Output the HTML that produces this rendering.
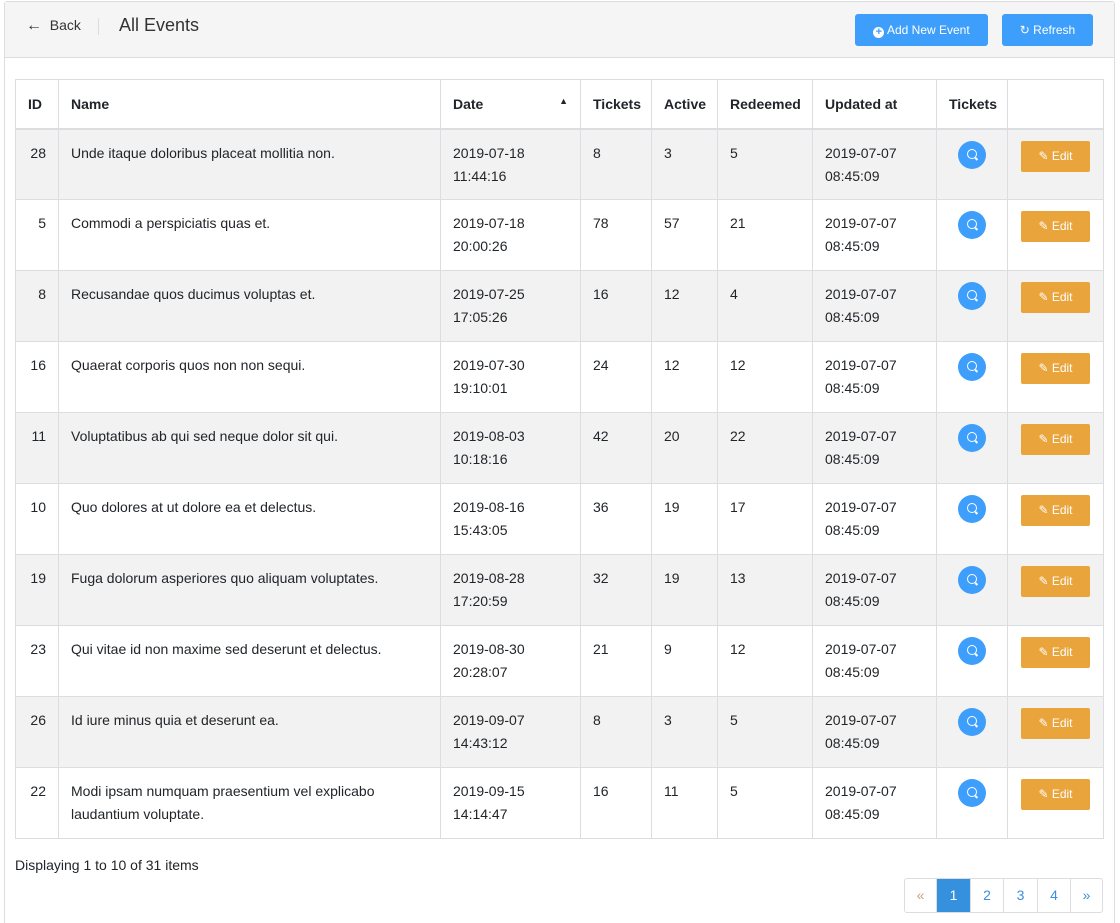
<!DOCTYPE html>
<html><head><style>
*{box-sizing:border-box;margin:0;padding:0}
html,body{width:1120px;height:923px;overflow:hidden}
body{background:#fff;font-family:"Liberation Sans",sans-serif;color:#212529;font-size:14px;position:relative}
.card{position:absolute;left:4px;top:1px;width:1111px;height:940px;border:1px solid #dcdde0;border-radius:3px}
.hdr{position:absolute;left:5px;top:2px;width:1109px;height:56px;background:#f5f5f6;border-bottom:1px solid #dcdde0}
.back{position:absolute;left:26px;top:17px;font-size:14px;color:#333}
.sep{position:absolute;left:98px;top:18px;width:1px;height:17px;background:#dcdde0}
.title{position:absolute;left:119px;top:15px;font-size:18px;color:#333}
.btn{position:absolute;top:14px;height:32px;background:#3e9efb;color:#fff;border-radius:3px;font-size:12px;line-height:32px;text-align:center}
table{position:absolute;left:15px;top:79px;border-collapse:collapse;width:1088px;table-layout:fixed}
td,th{border:1px solid #dcdde0;vertical-align:top;text-align:left;padding:0 12px}
th{height:49px;font-weight:bold;font-size:14px;vertical-align:middle;border-bottom:2px solid #dcdde0}
td{height:71px;padding-top:12px;line-height:23px}
tbody tr:nth-child(odd){background:#f2f2f2}
.c{text-align:center}
.srch{display:inline-block;width:28px;height:28px;border-radius:50%;background:#3e9efb;margin-top:-1px;position:relative}
.edit{display:inline-block;width:69px;height:31px;background:#e9a43b;border-radius:2px;color:#fff;font-size:12px;line-height:31px;margin-top:-1px}
.info{position:absolute;left:15px;top:857px;font-size:14px}
.pg{position:absolute;left:904px;top:878px;height:35px;display:flex;border:1px solid #dcdde0;border-radius:3px;overflow:hidden}
.pg div{height:33px;line-height:33px;text-align:center;color:#3e8ee0;border-left:1px solid #dcdde0;font-size:14px}
.srch::after{content:"";position:absolute;left:9px;top:8px;width:8px;height:8px;border:1.5px solid #fff;border-radius:50%}
.srch::before{content:"";position:absolute;left:17px;top:17px;width:3px;height:1.5px;background:#fff;transform:rotate(45deg)}
</style></head><body>
<div class="card"></div>
<div class="hdr"></div>
<div class="back"><span style="font-size:16px">&#8592;</span>&nbsp; Back</div>
<div class="sep"></div>
<div class="title">All Events</div>
<div class="btn" style="left:855px;width:133px"><span style="display:inline-block;width:11px;height:11px;border-radius:50%;background:#fff;color:#3e9efb;font-size:11px;line-height:11px;font-weight:bold;vertical-align:-1px">+</span> Add New Event</div>
<div class="btn" style="left:1002px;width:91px">&#8635; Refresh</div>
<table>
<colgroup><col style="width:43px"><col style="width:382px"><col style="width:140px"><col style="width:71px"><col style="width:66px"><col style="width:95px"><col style="width:124px"><col style="width:71px"><col style="width:96px"></colgroup>
<thead><tr><th>ID</th><th>Name</th><th>Date<span style="float:right;font-size:9px">&#9650;</span></th><th>Tickets</th><th>Active</th><th>Redeemed</th><th>Updated at</th><th>Tickets</th><th></th></tr></thead>
<tbody>
<tr><td style="text-align:right">28</td><td>Unde itaque doloribus placeat mollitia non.</td><td>2019-07-18<br>11:44:16</td><td>8</td><td>3</td><td>5</td><td>2019-07-07<br>08:45:09</td><td class="c"><span class="srch"></span></td><td class="c"><span class="edit">&#9998; Edit</span></td></tr>
<tr><td style="text-align:right">5</td><td>Commodi a perspiciatis quas et.</td><td>2019-07-18<br>20:00:26</td><td>78</td><td>57</td><td>21</td><td>2019-07-07<br>08:45:09</td><td class="c"><span class="srch"></span></td><td class="c"><span class="edit">&#9998; Edit</span></td></tr>
<tr><td style="text-align:right">8</td><td>Recusandae quos ducimus voluptas et.</td><td>2019-07-25<br>17:05:26</td><td>16</td><td>12</td><td>4</td><td>2019-07-07<br>08:45:09</td><td class="c"><span class="srch"></span></td><td class="c"><span class="edit">&#9998; Edit</span></td></tr>
<tr><td style="text-align:right">16</td><td>Quaerat corporis quos non non sequi.</td><td>2019-07-30<br>19:10:01</td><td>24</td><td>12</td><td>12</td><td>2019-07-07<br>08:45:09</td><td class="c"><span class="srch"></span></td><td class="c"><span class="edit">&#9998; Edit</span></td></tr>
<tr><td style="text-align:right">11</td><td>Voluptatibus ab qui sed neque dolor sit qui.</td><td>2019-08-03<br>10:18:16</td><td>42</td><td>20</td><td>22</td><td>2019-07-07<br>08:45:09</td><td class="c"><span class="srch"></span></td><td class="c"><span class="edit">&#9998; Edit</span></td></tr>
<tr><td style="text-align:right">10</td><td>Quo dolores at ut dolore ea et delectus.</td><td>2019-08-16<br>15:43:05</td><td>36</td><td>19</td><td>17</td><td>2019-07-07<br>08:45:09</td><td class="c"><span class="srch"></span></td><td class="c"><span class="edit">&#9998; Edit</span></td></tr>
<tr><td style="text-align:right">19</td><td>Fuga dolorum asperiores quo aliquam voluptates.</td><td>2019-08-28<br>17:20:59</td><td>32</td><td>19</td><td>13</td><td>2019-07-07<br>08:45:09</td><td class="c"><span class="srch"></span></td><td class="c"><span class="edit">&#9998; Edit</span></td></tr>
<tr><td style="text-align:right">23</td><td>Qui vitae id non maxime sed deserunt et delectus.</td><td>2019-08-30<br>20:28:07</td><td>21</td><td>9</td><td>12</td><td>2019-07-07<br>08:45:09</td><td class="c"><span class="srch"></span></td><td class="c"><span class="edit">&#9998; Edit</span></td></tr>
<tr><td style="text-align:right">26</td><td>Id iure minus quia et deserunt ea.</td><td>2019-09-07<br>14:43:12</td><td>8</td><td>3</td><td>5</td><td>2019-07-07<br>08:45:09</td><td class="c"><span class="srch"></span></td><td class="c"><span class="edit">&#9998; Edit</span></td></tr>
<tr><td style="text-align:right">22</td><td>Modi ipsam numquam praesentium vel explicabo laudantium voluptate.</td><td>2019-09-15<br>14:14:47</td><td>16</td><td>11</td><td>5</td><td>2019-07-07<br>08:45:09</td><td class="c"><span class="srch"></span></td><td class="c"><span class="edit">&#9998; Edit</span></td></tr>
</tbody></table>
<div class="info">Displaying 1 to 10 of 31 items</div>
<div class="pg"><div style="width:31px;border-left:none;color:#c9a47a">«</div><div style="width:34px;background:#3590dd;color:#fff">1</div><div style="width:33px">2</div><div style="width:34px">3</div><div style="width:33px">4</div><div style="width:32px">»</div></div>
</body></html>
